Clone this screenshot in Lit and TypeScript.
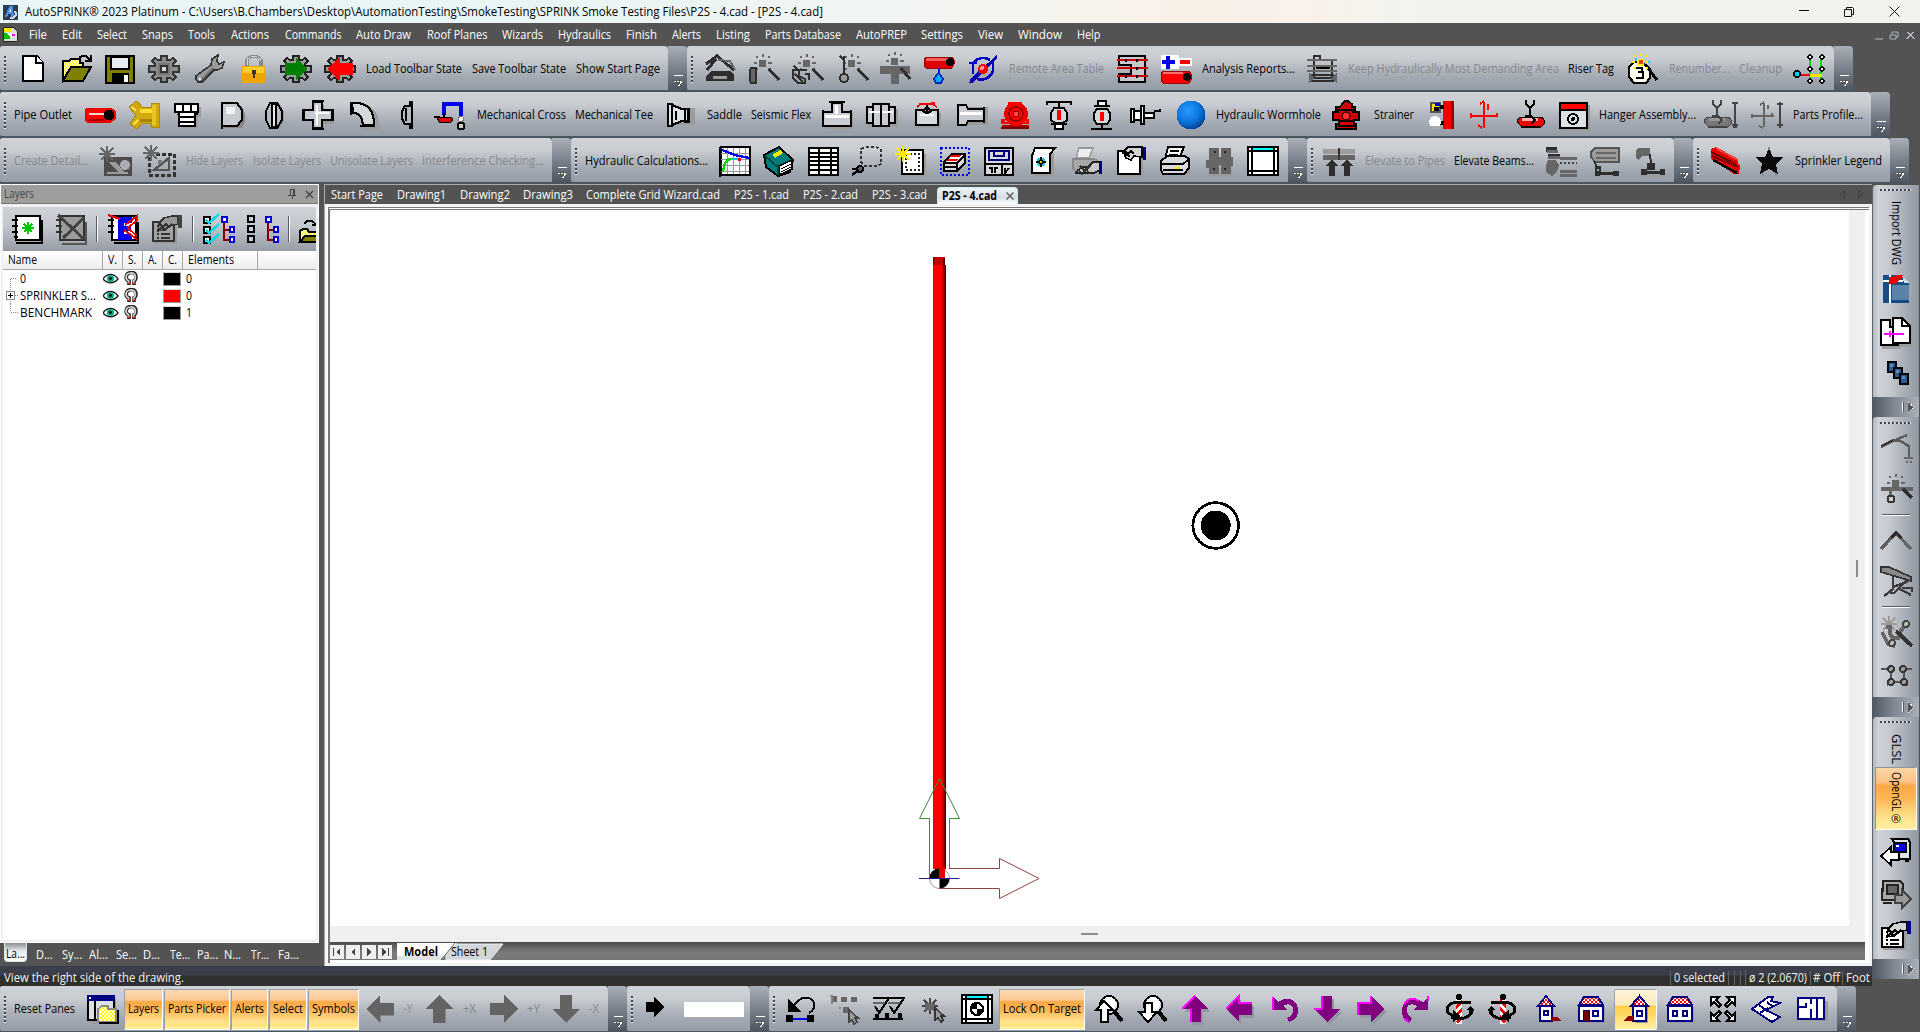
import { LitElement, html, css, svg, nothing } from "lit";
import { customElement, property } from "lit/decorators.js";

/* ---------- drawing helpers for the 32 x 32 toolbar icons ---------- */
const K = "#000", R = "#ff0000", G = "#666", D = "#2e2e2e", N = "#000080", S = "#9b9b9b", W = "#fff";
const p = (d: string, f = "none", s = "none", w = 2) =>
  svg`<path d=${d} fill=${f} stroke=${s} stroke-width=${w}></path>`;
const c = (x: number, y: number, r: number, f = "none", s = "none", w = 2) =>
  svg`<circle cx=${x} cy=${y} r=${r} fill=${f} stroke=${s} stroke-width=${w}></circle>`;
const burst = (x: number, y: number, f: string) =>
  p(`M${x - 4} ${y - 3}h7v7h-7zM${x - 1} ${y - 9}h2v3h-2zM${x - 9} ${y - 1}h3v2h-3zM${x + 5} ${y - 1}h4v2h-4zM${x - 7} ${y - 7}h2v2h-2zM${x + 5} ${y - 7}h2v2h-2zM${x - 7} ${y + 5}h2v2h-2zM${x + 5} ${y + 5}h2v2h-2z`, f);
const star8 = (x: number, y: number, f: string) =>
  p(`M${x - 8} ${y}h16M${x} ${y - 8}v16M${x - 6} ${y - 6}l12 12M${x + 6} ${y - 6}l-12 12`, "none", f, 2);
const gearShape = "M13 3h6v4h3l3-2 3 3-3 3v2h6v6h-6v2l3 3-3 3-3-2h-3v4h-6v-4h-3l-3 2-3-3 3-3v-2H1v-6h6v-2L4 8l3-3 3 2h3z";
const gearBase = [p(gearShape, S, "#222", 1.6)];
const arrowL = "M1 16L15 2v8h14v12H15v8z";
const arrowU = "M16 2L30 16h-8v14H10V16H2z";
const arrowR = "M31 16L17 2v8H3v12h14v8z";
const arrowD = "M16 30L30 16h-8V2H10v14H2z";
const purple = (d: string, hi: string) => [
  svg`<g transform="translate(2 3)">${p(d, "#9196a0")}</g>`, p(d, "#800080"), p(hi, "none", "#ff00ff", 2)];
const house = (x: number, w: number, door: unknown) => [
  p(`M${x + 2} 14h${w}v16h-${w}z`, S),
  p(`M${x} 13h${w}v15h-${w}z`, W, N, 2),
  w > 18 ? p(`M${x} 12l5-8h${w - 10}l5 8z`, "url(#chk)", N, 2) : p(`M${x - 2} 13l${w / 2 + 2}-10 ${w / 2 + 2} 10z`, "url(#chk)", N, 2),
  door];
const handSheet = (paper: string, skin: string, cuff: string, ink: string) => [
  p("M3 11h23v20H3z", S), p("M2 9h21v19H2z", paper, ink, 2),
  p("M6 17h2M6 21h2M6 25h2M10 21h9M10 25h9", "none", ink, 2),
  p("M8 10l5-5 8-2h6v8l-8 2-6 4-6 1z", skin, ink, 1.5), p("M6 14l3-3 3 3 3-3 3 3 3-3M8 17l3-3 3 3 3-3", "none", ink, 1.5), p("M27 2h4v13h-4z", cuff)];
const mag = (arrow: string) => [c(17, 12, 9, "#d5d8dc", K, 2), p("M22 18l8 10", "none", K, 4), c(17, 11, 7, W), p(arrow, W, K, 2)];
const barber = (flip: boolean) => svg`<g transform=${flip ? "translate(32 0) scale(-1 1)" : ""}>
  ${p("M13 6h6v25h-6z", W)}${p("M13 12l6-6v4l-6 6zM13 20l6-6v4l-6 6zM13 28l6-6v4l-4 5z", R)}${c(16, 4, 3, K)}
  ${p("M28 9H14c-12 2-14 11-2 14", "none", K, 3)}${p("M8 24c10 4 20 0 21-6h-3", "none", K, 3)}${p("M10 17v12l8-6z", K)}${p("M23 17h8l-3-4z", K)}</g>`;
const sheetWin = [p("M1 2h30v28H1z", W, K, 2), p("M1 6h30M5 2v28M27 2v28M1 26h30", "none", K, 1.5), p("M6 3h20v2H6z", "#0ff")];
const hanger = (a: string, b: string, l: string) => [p("M12 1v4l4 4 4-4V1M16 9v10", "none", l, 2.4), p("M6 18h22l2 3v4l-3 3H8l-3-3-2-3z", b, l, 1), p("M8 19h16v3H8z", a), p("M11 17h6l4 4-4 4M7 28h19", "none", l, 1.5)];

const ICONS: Record<string, unknown> = {
  new: [p("M6 3h14l6 7v18H6z", W, K, 2), p("M19 3v7h7", W, K, 2)],
  open: [p("M2 8h6l2-2h9v4h3v4H10L2 27z", "url(#yel)", K, 2), p("M2 28l8-14h20l-8 14z", "#808000", K, 2), p("M18 5l3-2h4l4 4M30 2v6h-6", "none", K, 2)],
  save: [p("M2 3h28v27H2z", "#808000", K, 2.4), p("M7 4h18v12H7z", "#e8ecf0", K, 1.5), p("M8 20h17v9H8z", K), p("M20 22h4v7h-4z", W)],
  gear: [p(gearShape, "#8d8d8d", "#333", 1.6), p("M10 10h12v12H10z", "#777"), p("M13 13h6v6h-6z", "#d6d8db", "#333", 1.6)],
  wrench: [p("M18 12l1-6 6-4-1 6 2 3 5-2-2 6-5 2-3 0L9 29l-4 0-2-3 0-3z", S, "#333", 1.6), p("M20 15L7 28", "none", "#777", 2), c(7, 26, 1.3, W)],
  lock: [p("M9 13V8c0-6 14-6 14 0v5", "none", "#8a8a8a", 3.5), p("M9 12V8c0-6 14-6 14 0", "none", "#d8d8d8", 1), p("M4 13h23v17H4z", "#eda600"), p("M5 14h21v6H5z", "#ffd02a"), p("M14 17h4v4h-1v4h-2v-4h-1z", "#333")],
  gearG: [...gearBase, p("M5 10h11V5l12 11-12 11v-5H5z", "#008000")],
  gearR: [...gearBase, p("M29 10H16V4L3 16l13 12v-6h13z", R)],
  detect: [p("M2 28h28v-7l-4-3H8l-6 5z", D), p("M9 23h14v3H9z", S), p("M2 11L13 3l17 14M12 6l-9 11", "none", D, 3), p("M14 7l12 1 5 9", "none", G, 2)],
  wand1: [burst(16, 10, G), p("M22 16l10 11", "none", D, 3), p("M4 15h5v15H4l-1-2V17z", G, D, 2)],
  wand2: [burst(16, 10, G), p("M22 16l10 11", "none", D, 3), p("M2 17h6v6l6 3v4H7l-5-5zM8 17h8M4 21l8 8M3 13l4 4M14 21h4v6", "none", D, 2)],
  wand3: [burst(16, 10, G), p("M22 16l10 11", "none", D, 3), p("M4 3l4 4v14M8 3v9", "none", D, 2), c(8, 25, 4, S, D, 2)],
  wand4: [burst(16, 8, G), p("M1 13h30v8H20v10h-8V21H1z", G), p("M22 15l9 11", "none", D, 3)],
  pipeDrop: [p("M3 4h26l2 3v4l-2 4H3l-2-3V7z", "#e00000", "#900", 1), p("M3 5h22v3H3z", "#ff5a5a"), c(27, 9, 4, K), p("M16 15v5l4 6-2 4h-5l-2-4 4-6", "#00a8ff", "#0020c0", 1.5)],
  orbit: [p("M30 2v3L6 30H2l2-5z", "#0000b0"), p("M23 7c-6-4-14-2-17 4v10M10 26c8 2 14-2 16-8V9M2 10h8", "none", "#0000c8", 2.6), c(16, 16, 5, R), c(15, 15, 2, "#ff9a9a")],
  area: [p("M3 3h26v26H3v-8h12V12H3z", "#c5c8cd", K, 2), p("M1 7h31M1 15h31M1 23h31", "none", "#d00000", 1.6), p("M9 6h2v3H9zM20 6h2v3h-2zM20 14h2v3h-2zM9 22h2v3H9zM20 22h2v3h-2z", K)],
  plusMinus: [p("M1 2h18v14H1z", W), p("M6 3h4v4h5v4h-5v5H6v-5H2V7h4z", "#0000e8"), p("M19 6h12v6H19z", R, W, 1.5), p("M3 18h26l2 3v6l-2 3H3l-2-3v-6z", R, "#900", 1), p("M3 19h20v2H3z", "#ff7070"), c(27, 24, 4, K)],
  frame: [p("M8 3h6v4h12v18H8z", "none", D, 2), p("M1 7h30M1 13h30M1 18h30", "none", G, 1.6), p("M5 22h22v6H5z", "none", D, 2), p("M9 25l-6-5v10zM25 25l6-5v10z", G), p("M10 15h14", "none", K, 1.5)],
  tag3: [p("M8 9h8l8 7v9l-4 5H8l-5-6V14z", "#fffff0", K, 2.2), p("M10 15h6v4h-4 5v6h-7", "none", K, 2.2), p("M21 14l10 13", "none", K, 3), burst(15, 9, "#ffee00"), p("M13 7h4v4h-4z", "#e04000"), p("M22 8h2v2h-2zM9 5h2v2H9z", "#0cf")],
  tree: [p("M17 4v24M28 4v24", "none", "#00e000", 2), p("M7 22h12", "none", R, 2.5), p("M17 22h12", "none", "#ffe800", 3), c(4, 21, 3, "#0cf", K, 1.6), ...[4, 16, 28].flatMap(y => [c(17, y, 2, W, K, 1.6), c(29, y, 2, W, K, 1.6)])],
  pipeRed: [p("M3 9h24l4 3v8l-4 3H3l-2-3V12z", R, "#d00", 1), p("M5 14h17v2H5z", "#ffd0d0"), p("M5 20h16v2H5z", "#a00000"), c(25, 16, 5.5, K)],
  brass: [p("M1 8l8-6 5 6h9V4h8v24h-8v-4h-9l-5 6-7-5 6-9z", "#d0a90c", "#b08a00", 1), p("M12 10h12v4H12z", "#ffdb38"), p("M24 6h4v20h-4z", "#e8c424"), p("M12 20h12v3H12z", "#a88200"), p("M4 8l4 4M5 26l5-5", "none", "#ffe050", 2)],
  plug: [p("M6 8h24v10h-3v11H11z", S), p("M4 5h23v8H4zM8 13h16v14H8z", W, K, 2), p("M12 5v7M20 5v7M9 18h14M9 23h14M7 15l2 3", "none", K, 2), p("M24 15h3", "none", K, 2)],
  cap: [p("M10 9h17l2 6v8l-3 6H9z", "#888"), p("M6 4h15l5 7v10l-5 6H6z", "#c8cbd0", K, 2.2), p("M10 8h9v7h-9z", "#f2f4f6"), p("M6 3v27", "none", K, 2.4)],
  flange: [p("M14 5h8l4 8v9l-4 8h-8z", S), p("M12 4h7l5 8v9l-5 8h-7l-4-8V12z", "#b8bcc2", K, 2.2), p("M14 5h4v23h-4z", "#e6e8ea", K, 1.5)],
  cross: [p("M12 6h10v9h10v10H22v6H12z", "#999"), p("M11 3h9v8h10v10H20v8h-9v-8H2V11h9z", "#c8ccd2", K, 2.2), p("M13 14h14M15 6v20", "none", W, 2), p("M1 10v12M31 10v12M10 2h12M10 30h12", "none", K, 2)],
  elbow: [p("M7 6c16-1 24 7 24 23H15", "none", S, 3), p("M5 4c16-1 22 7 22 22H16c-1-9-4-12-10-12z", "#d5d8dc", K, 2.2), p("M4 3v13M13 27h15", "none", K, 2.6)],
  cap2: [p("M15 7h5V3h2v26h-2v-4h-5l-3-5v-8z", "#b5bac0", K, 2.2), p("M16 9v13", "none", K, 2)],
  gooseneck: [p("M10 16V5h17v13", "none", "#0000f0", 3.4), p("M3 18h14l2 2-2 3H5z", "#e00000", K, 1), p("M0 18h6M10 14v5", "none", K, 2), c(27, 20, 2.5, W, "#777", 1), c(27, 27, 3.4, "#ccc", K, 2)],
  reducer: [p("M8 9h23v17H8z", S), p("M4 5h4v22H4zM8 6l10 4h6v12h-6L8 26z", "#dfe2e5", K, 2.2), p("M21 10h4v13h-4zM12 12v9", "none", K, 2)],
  tee: [p("M4 14h28v16H4z", S), p("M11 4h10v9h9v14H2V13h9z", "#c9cdd2", K, 2.2), p("M8 3h16M2 11v17M30 11v17", "none", K, 2.4), p("M4 17h24M15 6v9", "none", W, 3)],
  coupling: [p("M4 10h29v18H4z", S), p("M2 8h6v16H2zM8 5h16v22H8zM24 8h6v16h-6z", "#c9cdd2", K, 2.2), p("M4 13h24", "none", W, 2.6), p("M16 5v22", "none", K, 2)],
  wye: [p("M6 14h24v15H6z", S), p("M5 11h6l5 4 5-4h6v15H5z", "#d5d8dc", K, 2.2), p("M16 5v8M12 12l4-4 4 4", "none", K, 2), p("M6 8l4-3h12l4 3M8 5h2M20 4h4", "none", R, 1.8), p("M9 16h14", "none", W, 2)],
  nozzle: [p("M5 8h28v18H5z", S), p("M3 6h8l2 4h16v12H13l-2 4H3z", "#c9cdd2", K, 2.2), p("M5 14h22", "none", W, 3), p("M29 8v16", "none", K, 2)],
  pump: [p("M3 26h27v4H3z", "#a00"), c(17, 15, 12, "#e80000"), p("M9 3h14v6H9zM2 25h28v-5h-3v3H6v-3H2z", R), c(17, 15, 7, R, "#900", 1.6), c(17, 15, 3, "#ff4a4a", "#900", 1), p("M2 29h28", "none", "#700", 2)],
  sprkUp: [p("M4 6V3h24v3M16 3v5", "none", K, 2.2), p("M11 9h10l3 5v7l-4 3h-8l-4-3v-7z", "#d5d8dc", K, 2), p("M14 11h4v10h-4z", R), p("M8 25h16M12 25v5h8v-5", W, K, 2.2)],
  sprkDn: [p("M8 7h16M12 2v5h8V2z", W, K, 2.2), p("M11 10h10l3 4v7l-3 4h-10l-3-4v-7z", "#d5d8dc", K, 2), p("M14 13h4v9h-4z", R), p("M16 25v5M6 30h20M6 29v2", "none", K, 2.4)],
  sidewall: [p("M2 10h3v13H2zM5 12h7v9H5zM12 7h3v18h-3z", W, K, 2), p("M15 14h10v5H15z", W, K, 1.6), p("M25 12h6v-2", "none", K, 1.8)],
  sphere: [svg`<circle cx="16" cy="16" r="14.5" fill="url(#ball)"></circle>`],
  hydrant: [p("M12 5l3-3h3l4 3v3h3v3h-2v2h6v8h-5v4h2v5H6v-5h3v-4H3v-8h5v-2H6V8h4z", "#d40000", K, 1.8), p("M6 11h20M9 22h15M8 27h17", "none", K, 1.4), c(16, 17, 4, "#ff2a2a", "#500", 1.4)],
  snow: [p("M17 2h11v28H17z", "#f00000"), p("M25 2h3v28h-3z", "#900"), p("M5 4h9v9H5z", "#ffe000", "#555", 1.6), p("M9 4h5v3H9z", "#0000d0"), p("M8 8h5v4H8z", K), p("M14 8h4M14 24h4", "none", K, 4), c(9, 23, 6, W), p("M5 27h8v3H5z", "#aaa")],
  crossR: [p("M3 17h27M16 3v26M12 5l4-3M20 5v6M3 14v5M29 14v4M10 26l4 3", "none", R, 2)],
  hang: hanger("#ffb0b0", "#f00000", K),
  window: [p("M4 6h29v26H4z", S), p("M3 4h27v25H3z", "#dfe2e5", K, 2.4), p("M4 5h25v5H4z", R), p("M3 11h27", "none", K, 2), c(16, 20, 5, "none", K, 2), c(16, 20, 2, K)],
  hangG: [svg`<g transform="translate(-5 0)">${hanger("#999", "#777", "#444")}</g>`, p("M29 3v26M26 4h6M26 26h6M27 28h4", "none", "#444", 2)],
  crossG: [p("M1 17h22M13 4v24M9 6l4-3M17 6v4M1 15v4M21 14v4M8 27l4 2", "none", G, 2), p("M29 3v26M26 5h6M26 26h6", "none", "#444", 2)],
  detail1: [p("M4 12h28v19H4z", "#4c4c4c"), star8(7, 9, G), p("M9 17h7l8 10h-6z", S), c(25, 20, 5, "#a9acb1"), p("M7 28h21", "none", S, 1.5)],
  detail2: [svg`<path d="M6 9h24v21H5V12" fill="none" stroke="#333" stroke-width="3" stroke-dasharray="4 2"></path>`, star8(7, 8, G), p("M10 25l15-12v12z", "none", "#555", 2.4), p("M14 15h4v4h-4z", "#777")],
  graph: [p("M2 2h29v28H2z", W, K, 2.4), p("M2 8h28M2 14h28M2 20h28M2 26h28M8 3v26M14 3v26M20 3v26M26 3v26", "none", "#999", 1), p("M3 5l13 5 14 3", "none", "#0000f0", 2.4), p("M4 27c1-9 4-13 8-13", "none", "#00d800", 2.4), p("M12 14h9", "none", "#00c8d0", 2), p("M19 13h3v3h-3z", R), p("M1 2v30", "none", K, 2)],
  book: [p("M1 10L16 2l14 13-3 12-12 4L3 22z", "#007c7c", K, 2), p("M16 21l13-6v9l-12 6z", W, K, 1.5), p("M9 10l8-5 3 3-8 5z", "#ffee00"), p("M18 24l10-5M18 27l10-5", "none", K, 1), p("M2 11l13 11v8", "none", "#004848", 2)],
  table: [p("M2 3h29v27H2z", W, K, 2.4), p("M2 8h29M2 12h29M2 16h29M2 20h29M2 25h29", "none", K, 1.8), p("M12 3v27M24 3v27", "none", K, 2)],
  lasso: [svg`<path d="M10 4l4-2h11l5 3v14l-4 2H14l-4-4z" fill="none" stroke="#333" stroke-width="2" stroke-dasharray="3 2"></path>`, c(9, 24, 3, G, K, 2), p("M1 30l7-5M1 24h6", "none", K, 2.5)],
  newdoc: [p("M8 9h23v22H8z", S), p("M7 5h21v24H7z", W, K, 2), svg`<path d="M11 9h13v16H11z" fill="none" stroke="#222" stroke-width="2" stroke-dasharray="2 2"></path>`, star8(8, 9, "#ffe800")],
  selBox: [svg`<path d="M2 3h28v27H2z" fill="none" stroke="#0000f0" stroke-width="2" stroke-dasharray="2 2"></path>`, p("M5 17l8-8h13v9l-8 8H5z", "#d8dadd", K, 2), p("M6 17l7-7h12l-6 7z", W), p("M12 10h10l-2 2H11zM9 14h10l-2 2H8z", R), p("M18 18l8-8M6 18h12v7M6 22h12", "none", K, 1.8)],
  panel: [p("M2 3h28v27H2z", "#d8dadd", K, 2.4), p("M6 6h20v9H6zM11 6v5h10V6", "none", N, 2), p("M2 19h28M19 19v11M6 23h3v5M12 28v-5h3M22 23v5l4-5", "none", K, 2)],
  scroll: [p("M7 9h20v22H7z", S), p("M8 3h20l-5 6v19H5V11z", W, K, 2), c(14, 17, 4.5, "#0cc"), p("M14 12v10M9 17h10", "none", K, 1.4), c(14, 17, 2, "#f0c000", K, 1)],
  printG: [p("M8 3h14l-4 10H5z", "#eee", "#999", 1.6), p("M2 14h22l5 4v8H4l-2-3z", "#a8a8a8", "#888", 1.4), p("M5 28l5-6h7l5-5h7v8l-6 3z", "#c8c8c8", "#222", 1.5), p("M7 24l4 5 4-5 4 5M9 21l5 5 5-5", "none", "#333", 1.5), p("M28 16h3v13h-3z", N)],
  docHand: [p("M5 8h23v24H5z", S), p("M3 6h22v23H3z", W, K, 2.2), p("M9 6l4-4h14v10l-8-1-3 4-5-2z", "#d0d2d4", K, 1.6), p("M7 9l3-3 3 3 3-3 3 3M9 12l3-3 3 3", "none", K, 1.6), p("M28 2h3v13h-3z", N)],
  print: [p("M4 16h27v13H8z", S), p("M9 2h16l-5 12H6z", W, K, 2), p("M11 6h9M10 10h9", "none", K, 1.6), p("M2 16l6-5h18l4 3v9l-5 6H4l-2-4z", "#d8dadd", K, 2), p("M3 19h21l5-4M4 25h20", "none", K, 2), p("M15 22h6v2h-6z", "#ffe800")],
  fixture: [p("M5 3h10v26H5v-6H2v-8h3zM17 3h10v9h2v9h-2v8H17z", G), p("M14 12h5v8h-5z", G), p("M10 6h2v2h-2zM20 6h2v2h-2zM9 23h2v2H9zM20 23h2v2h-2z", "#222"), p("M5 30h23", "none", S, 2)],
  winCad: sheetWin,
  elevPipe: [p("M0 4h32v5H0z", S), p("M0 10h32v5H0z", G), p("M16 3v12", "none", "#333", 1.5), p("M9 15l7 6h-4v10H6V21H2zM24 15l7 6h-4v10h-6V21h-4z", D)],
  elev1: [p("M1 2h11v5H1zM3 9h12v5H3z", D), p("M2 6h11M3 12h12", "none", G, 3), p("M3 15h8l3 5-2 7-5 4-6-4V20z", G), p("M15 13h17M15 26h17M15 30h17", "none", G, 3), svg`<path d="M15 18h17" stroke="#444" stroke-width="2" stroke-dasharray="2 2"></path>`],
  elev2: [p("M6 3h24v14H6l-4-5V7z", S, "#555", 2), p("M7 8h20M7 13h20", "none", G, 2), p("M5 16l4 8M7 22h4v6H7z", "none", D, 2), p("M6 26h5v5H6zM24 26h6v5h-6zM11 27h14v3H11z", D)],
  elev3: [p("M4 3h12v8H8l-3 4-3-2V6z", G), p("M16 9l1 10M14 19h6v5h-6z", D, D, 2), p("M7 24h6v6H7zM26 24h5v6h-5zM13 26h14v3H13z", D), p("M8 31h24", "none", S, 2)],
  beam: [p("M2 4l5-2 22 12v4l2 3-1 8-5 0L2 14z", "#e80000"), p("M3 11l26 11M2 7l25 12", "none", "#700", 2), p("M4 15l24 13", "none", K, 2.5), p("M7 3l22 12", "none", "#ff4040", 2)],
  star: [p("M16 3l4 9h10l-7 7 2 10-9-5-9 5 2-10-7-7h10z", "#0a0a0a"), p("M16 2v3M9 30h2M22 30h2", "none", "#888", 1.5)],
  layNew: [p("M5 3h24v24H5z", W, K, 2.2), p("M1 7h6M1 13h6M1 19h6M3 24h4", "none", K, 2.4), p("M11 15h12M17 9v12M13 11l8 8M21 11l-8 8", "none", "#00c800", 1.8), p("M5 30h26V7", "none", K, 1.8)],
  layDel: [p("M5 3h24v24H5z", S, "#333", 2.2), p("M1 7h6M1 13h6M1 19h6", "none", "#333", 2.2), p("M3 2l26 24M29 5L8 25", "none", "#444", 3), p("M7 31h24V9", "none", "#555", 2)],
  layE: [p("M5 3h24v24H5z", W, K, 2.2), p("M1 7h6M1 13h6M1 19h6", "none", K, 2.2), p("M11 4h14v6h-8v3h7v5h-7v3h8v6H11z", "#0000f0"), p("M1 2l12 4M18 12l12-9v4l-9 8 10 9v3l-14-10", "none", "#e80000", 2), p("M7 30h24V9", "none", K, 1.8)],
  layProp: handSheet("#a0a2a4", "#999", "#444", "#333"),
  layTree: [p("M1 4h6v6H1zM1 14h6v6H1zM1 24h6v6H1z", W, K, 2.2), p("M3 7l3 3 10-9M3 17l3 3 10-9M3 27l3 3 10-9", "none", "#00d8e8", 2.4), p("M21 9v18h6M21 17h6", "none", "#800000", 2), p("M19 4h5v5h-5zM27 14h4v5h-4zM27 24h4v5h-4z", W, "#0000d8", 2)],
  layTree2: [p("M1 3h6v6H1zM1 13h6v6H1zM1 23h6v6H1z", "#ccd", K, 2.2), p("M21 9v18h6M21 17h6", "none", "#800000", 2), p("M19 4h5v5h-5zM27 14h4v5h-4zM27 24h4v5h-4z", W, "#0000d8", 2)],
  layOpen: [p("M1 28V18l3-2h4l2 3h9v9z", "url(#yel)", K, 2), p("M1 29l5-6h13v6z", "#808000", K, 2), p("M5 11l3-3h5l5 4M18 7v5h-5", "none", K, 2)],
  panes: [p("M3 6h27v25H6z", S), p("M2 3h26v24H2z", "#dcdfe3", K, 2), p("M1 2h28v6H1z", N), p("M3 4h2v2H3z", W), p("M9 8v19", "none", K, 2), p("M12 16l4-3h6v3h8v13H12z", "url(#yel)", "#888", 1.5), p("M13 30h19V17", "none", K, 2.4)],
  gL: [p(arrowL, "#636363"), p("M15 22v8M15 22h14", "none", "#888", 1)], gU: [p(arrowU, "#636363"), p("M22 16v14", "none", "#888", 1)],
  gR: [p(arrowR, "#636363"), p("M31 16L17 30", "none", "#888", 1)], gD: [p(arrowD, "#636363"), p("M30 16L16 30", "none", "#888", 1)],
  bR: [p("M7 9h8V4l11 10-11 10v-5H7z", K)],
  undoDim: [p("M5 17L14 7c5-4 13-3 15 3 1 5-1 8-5 10", "none", K, 2), p("M3 6v13h13z", K), p("M1 22h7v7H1zM22 22h7v7h-7z", K), p("M8 26h14", "none", "#0000ff", 2.4)],
  snapG: [p("M2 3h6v6H2zM12 4h6v5h-6zM22 4h6v5h-6zM14 14h6v6h-6z", G), p("M1 3h2v8M10 15h2", "none", "#888", 2), p("M20 17v12l3-2 2 4 3-2-2-4h3z", S, "#444", 1.6)],
  checks: [p("M1 5h32M1 26h30", "none", K, 2), p("M3 13l4 7L17 5M18 13l4 7L32 5", "none", K, 2), p("M1 10h12M16 10h12", "none", G, 1.4), p("M3 25h4v-4H3zM13 26h4v-6h-4zM26 20h4v6h-4z", K)],
  burstG: [star8(14, 13, "#444"), p("M9 10h10v7H9z", G), p("M19 15v12l3-2 3 4 2-2-2-4h3z", S, "#333", 1.6)],
  target: [...sheetWin, c(16, 16, 6, "none", K, 2.4), p("M10 16a6 6 0 016-6v6zM16 16h6a6 6 0 01-6 6z", K)],
  magU: mag("M12 8l9 9h-5v12H9V17H4z"), magD: mag("M9 10h7v9h5l-9 10-9-10h6z"),
  pU: purple("M16 3L29 16h-7v13H11V16H3z", "M3 16L16 3M12 16v13"), pL: purple("M3 16L16 3v7h13v12H16v7z", "M3 16L16 3v7h13"),
  pD: purple("M16 29L3 16h8V3h10v13h8z", "M3 16h8V3"), pR: purple("M29 16L16 3v7H3v12h13v7z", "M3 22V10h13V3"),
  rotL: [p("M6 14V4l5 5c10-7 20-2 20 8s-5 10-9 12l-2-4c6-2 6-6 6-9 0-5-6-6-10-3l4 4H6z", "#800080"), p("M6 17V4", "none", "#ff00ff", 2)],
  rotR: [p("M28 14V4l-5 5C14 2 2 6 2 17s4 10 8 12l2-4c-5-2-5-6-5-9 0-5 6-6 10-3l-4 4h15z", "#800080"), p("M28 3v5M4 12c2-6 9-8 15-4M4 26l5 3", "none", "#ff00ff", 2)],
  barL: barber(false), barR: barber(true),
  h1: house(9, 12, [p("M13 18h4v4h-4z", W, N, 1.8), p("M20 28h10l-4-4h-5z", "#900000")]),
  h2: house(4, 24, [p("M8 17h6v11H8z", "#700000", N, 1), p("M18 18h5v5h-5z", W, N, 1.8)]),
  h3: house(13, 13, [p("M17 18h5v5h-5z", W, N, 1.8), p("M4 28h9v-5H8z", "#900000")]),
  h4: house(4, 24, [p("M9 18h4v5H9zM19 18h4v5h-4z", W, N, 1.8)]),
  expand: [p("M4 4h8l-3 3 5 5-2 2-5-5-3 3zM28 4h-8l3 3-5 5 2 2 5-5 3 3zM4 28h8l-3-3 5-5-2-2-5 5-3-3zM28 28h-8l3-3-5-5 2-2 5 5 3-3z", W, K, 2)],
  iso: [p("M1 16L17 4h5l-2 4 9 2-14 7 14 7-8 5z", W, N, 2), p("M8 12l8 6M16 9l6 5M9 20l8-5", "none", N, 2)],
  plan: [p("M5 8h28v20H5z", S), p("M3 5h26v21H3z", W, N, 2.4), p("M3 14h8v-4M22 6v19M16 5v6M16 16v9", "none", N, 2.2)],
  dwg: [p("M3 2h19l7 8v20H3z", "#174d84"), p("M12 12h17v15H12z", "#5b83aa"), p("M3 8h20M10 2v28", "none", W, 2), p("M9 4h4l2-2h8v3l-5 3-3 3h-6z", "#e80000"), p("M22 2l7 8h-5z", "#c8d8e8")],
  docs: [p("M2 31h19M30 7v22H16", "none", S, 3), p("M1 4h9v7h8v18H1z", W, K, 2.2), p("M13 2h9l8 8v17H13z", W, K, 2.2), p("M22 2v8h7", "none", K, 2), p("M4 18h20M10 15v6", "none", "#ff00ff", 2.4)],
  chain: [p("M8 4h8v10H8z", "#245c93", K, 2), p("M14 10h8v10h-8z", "#245c93", K, 2), p("M20 16h8v10h-8z", "#245c93", K, 2), p("M10 6h3v3h-3zM16 12h3v3h-3zM22 18h3v3h-3z", "#5b8bbb")],
  arc: [p("M1 15l12-6h7l9 5v11M13 9l14-6", "none", "#5c5c5c", 2.6), p("M24 26h9M26 30h2M30 30h2", "none", G, 2.4), p("M1 14l12-6", "none", "#333", 1.4)],
  sprkW: [burst(16, 9, G), p("M1 13h31v3H1zM10 15v10", G, G, 1), p("M10 15v10", "none", G, 3), p("M23 15l9 9", "none", D, 3), c(11, 25, 3.5, "#ccc", "#333", 2)],
  roof: [p("M1 25L16 9l15 16", "none", G, 3.4), p("M10 13l6-7 6 7-2 2-4-4-4 4z", D), p("M1 23l9-9", "none", "#333", 1)],
  roof2: [p("M1 1h8l22 10v4L1 6z", "#8a8a8a", "#333", 1.8), p("M13 9v14L4 30M13 21l16-6M18 22l13 7M26 15L14 27h-4M22 22h10v4", "none", "#3c3c3c", 2.4)],
  wizard: [star8(9, 7, S), p("M6 10h4v7l3 4h5l2-6 6-8M2 15l6 12 7 2", "none", "#666", 4), c(26, 7, 3, "#bbb", "#444", 2), c(12, 26, 3, "#bbb", "#444", 2), p("M16 14l16 15", "none", "#333", 4)],
  nodes: [p("M1 9h10v13h13V9h8M11 22l-4 3M24 22l4 3", "none", "#555", 2.6), c(11, 9, 3, S, "#333", 2), c(23, 9, 3, S, "#333", 2), c(11, 22, 3, S, "#333", 2), c(24, 22, 3, S, "#333", 2)],
  monL: [p("M12 3h16l2 3v17H15V8z", "#e0e2e5", K, 2.2), p("M14 7h12v9H14z", "#0000f0", K, 1.5), p("M16 9h3v2h-3z", W), p("M1 20l10-9v5h8v8h-8v5z", W, K, 1.8), p("M25 25h4", "none", K, 2)],
  monR: [p("M3 3h17l3 3v16H2z", "#a6a8aa", "#222", 2.2), p("M7 7h11v9H7z", "#666", "#222", 1.6), p("M31 21l-9-9v5h-7v8h7v5z", "#999", "#444", 1.6), p("M3 25h9", "none", "#222", 2)],
  sheetHand: [...handSheet(W, "#d0d2d4", N, K)],
  app: [p("M1 1h30v30H1z", "#2c3d50"), p("M5 26L15 4h6l3 22h-6l-1-6h-4l-3 6z", "#4c8ce0"), p("M17 9l-3 7h4z", W), p("M25 14c6 6 2 15-9 15", "none", "#cfd6de", 4)],
  doc: [p("M2 2h21l7 6v22H2z", "#d8e0d0", "#222", 2), p("M3 3h16v7H3z", "#ffe800"), p("M3 13h12v13H3z", "#00c000"), p("M8 13l11 12V12z", W), p("M20 14h5v5h-5z", "#e0e")],
};

const icon = (name: string, size = 32) => html`<svg class="ic" width=${size} height=${size} viewBox="0 0 32 32" shape-rendering="crispEdges">
  <defs>
    <pattern id="chk" width="4" height="4" patternUnits="userSpaceOnUse"><rect width="4" height="4" fill="#fff"></rect><rect width="2" height="2" fill="#f00"></rect><rect x="2" y="2" width="2" height="2" fill="#f00"></rect></pattern>
    <pattern id="yel" width="4" height="4" patternUnits="userSpaceOnUse"><rect width="4" height="4" fill="#ff0"></rect><rect width="2" height="2" fill="#fffce0"></rect><rect x="2" y="2" width="2" height="2" fill="#fffce0"></rect></pattern>
    <radialGradient id="ball" cx=".4" cy=".35" r=".7"><stop offset="0" stop-color="#2a9bff"></stop><stop offset=".6" stop-color="#0a72dc"></stop><stop offset="1" stop-color="#023a86"></stop></radialGradient>
  </defs>${ICONS[name]}</svg>`;

/* Label whose glyphs are condensed to fill a given advance width. */
@customElement("fit-text")
class FitText extends LitElement {
  @property({ type: Number }) w = 0;
  @property({ type: Boolean }) vertical = false;
  static styles = css`
    :host { display: block; flex: none; white-space: pre; }
    .t { display: inline-block; transform-origin: 0 0; }
    .v { display: block; writing-mode: vertical-rl; width: 16px; height: max-content; }
  `;
  render() { return html`<span class=${this.vertical ? "t v" : "t"}><slot></slot></span>`; }
  firstUpdated() {
    const t = this.renderRoot.querySelector(".t") as HTMLElement;
    const b = t.getBoundingClientRect();
    if (this.vertical) {
      this.style.height = this.w + "px";
      t.style.transform = `scaleY(${this.w / b.height})`;
    } else {
      this.style.width = this.w + "px";
      t.style.transform = `scaleX(${this.w / b.width})`;
    }
  }
}

/* Items carry their start offset and extent; rows turn them into flow margins. */
interface Item { x: number; w: number; body: unknown; cls?: string }
const T = (x: number, e: number, s: string, cls = ""): Item => ({ x, w: e - x, body: html`<fit-text .w=${e - x}>${s}</fit-text>`, cls });
const X = (x: number, e: number, s: string) => T(x, e, s, "dis");
const I = (mid: number, name: string): Item => ({ x: mid - 16, w: 32, body: icon(name) });
const B = (x: number, e: number, s: string, pad: number): Item => ({ x, w: e - x, cls: "btn", body: html`<fit-text .w=${e - x - pad * 2}>${s}</fit-text>` });
const row = (start: number, items: Item[]) => {
  let at = start;
  return items.map(i => {
    const m = i.x - at;
    at = i.x + i.w;
    return html`<div class="item ${i.cls ?? ""}" style="margin-left:${m.toFixed(1)}px;width:${i.w.toFixed(1)}px">${i.body}</div>`;
  });
};
const more = html`<div class="more"><svg width="12" height="16" viewBox="0 0 12 16" shape-rendering="crispEdges"><path d="M2 1h9v1H2z" fill="#fff"></path><path d="M1 6h9l-4 6z" fill="#555"></path><path d="M2 7h8l-4 6" fill="none" stroke="#fff" stroke-dasharray="2 1"></path></svg></div>`;
const bar = (start: number, end: number, items: Item[]) => html`<div class="bar" style="width:${end - start}px">
  <div class="body"><i class="grip"></i>${row(start + 6, items)}</div>${more}</div>`;

const MENU: [number, number, string][] = [[29, 47, "File"], [62, 82, "Edit"], [97, 127, "Select"], [142, 173, "Snaps"], [188, 215, "Tools"], [231, 269, "Actions"], [284.5, 341, "Commands"], [356, 411, "Auto Draw"], [426.5, 487, "Roof Planes"], [502, 543, "Wizards"], [558, 611, "Hydraulics"], [626, 657, "Finish"], [672, 701, "Alerts"], [716, 750, "Listing"], [765, 841, "Parts Database"], [856, 907, "AutoPREP"], [921, 963, "Settings"], [978, 1003, "View"], [1018, 1062, "Window"], [1077, 1100.5, "Help"]];
const TABS: [number, number, string][] = [[331, 383, "Start Page"], [397, 446, "Drawing1"], [460, 510, "Drawing2"], [523, 573, "Drawing3"], [586, 720, "Complete Grid Wizard.cad"], [734, 789, "P2S - 1.cad"], [803, 858, "P2S - 2.cad"], [872, 927, "P2S - 3.cad"]];
const PANES: [number, number, string][] = [[35.5, 52, "D..."], [62, 82, "Sy..."], [89, 108, "Al..."], [116, 137, "Se..."], [143, 160, "D..."], [170, 190, "Te..."], [197, 218, "Pa..."], [224, 241, "N..."], [251, 269, "Tr..."], [278, 299, "Fa..."]];

const eye = html`<svg width="16" height="14" viewBox="0 0 16 14"><path d="M0 7C4 1 11 1 15 7 11 12 4 12 0 7z" fill="#fff" stroke="#222" stroke-width="1.4"></path><circle cx="7.5" cy="6.5" r="3.6" fill="#0aa58c"></circle><circle cx="7.5" cy="6.5" r="1.4" fill="#000"></circle></svg>`;
const magnet = html`<svg width="14" height="15" viewBox="0 0 14 15"><path d="M5 14V10C1 9 1 2 7 1.500S13 9 10 10v4" fill="none" stroke="#222" stroke-width="3.600"></path><path d="M4.600 12V10C1 8 1 2.500 6.500 2S12.500 8 9.600 10v2" fill="none" stroke="#d4d4d4" stroke-width="1.700"></path><path d="M3 11.500h3v1.500H3zM9 11.500h3v1.500H9z" fill="#e22"></path></svg>`;

@customElement("app-root")
class AppRoot extends LitElement {
  static styles = css`
    :host { display: flex; flex-direction: column; width: 1920px; height: 1032px; overflow: hidden; background: #535353; font: 12px/16px "Open Sans", "Noto Sans", sans-serif; color: #000; }
    * { box-sizing: border-box; }
    .ic { display: block; flex: none; overflow: visible; }
    .item { display: flex; align-items: center; flex: none; justify-content: center; }
    .dis { color: #85888d; }
    .title { height: 23px; flex: none; display: flex; align-items: center; background: linear-gradient(90deg, #e7f5f7 0, #e9f5f5 28%, #f2f5f2 48%, #f9f1e8 62%, #f9f1ea 68%, #f1f4ee 74%, #f1f4ee 100%); }
    .title .item.cap { font-size: 12.5px; }
    .menu { height: 23px; flex: none; display: flex; align-items: center; color: #fff; }
    .tools { flex: none; }
    .line { display: flex; height: 46px; }
    .bar { display: flex; height: 44px; flex: none; border-radius: 2px; overflow: hidden; background: #626b76; box-shadow: 0 2px 0 #4b5560; }
    .body { flex: 1; display: flex; align-items: center; min-width: 0; padding-top: 2px; background: linear-gradient(#cfd2d7 0, #c9ccd1 28%, #b6bbc2 48%, #a3a9b2 72%, #969ca6 100%); border-radius: 2px 4px 0 0; }
    .grip { width: 2px; height: 27px; margin-left: 4px; flex: none; background: repeating-linear-gradient(#3d444d 0 2px, #e9ebee 2px 3px, transparent 3px 4px); }
    .more { width: 19px; flex: none; display: flex; align-items: flex-end; justify-content: center; background: linear-gradient(#a9afb8, #7e8691 45%, #4d5661); border-radius: 0 4px 0 0; }
    .mid { display: flex; height: 783px; margin-top: -1px; flex: none; border-top: 1px solid #4c5560; }
    .left { width: 319px; margin-right: 5px; display: flex; flex-direction: column; }
    .panel { height: 760px; background: #f0f0f0; border: 1px solid #fff; display: flex; flex-direction: column; padding: 0 2px 2px; }
    .phead { height: 19px; flex: none; margin: 0 -2px; background: #9c9e9b; border-bottom: 1px solid #777; display: flex; align-items: center; color: #484848; }
    .ptools { height: 44px; margin-top: 3px; flex: none; overflow: hidden; display: flex; align-items: center; background: linear-gradient(#cfd2d7, #c4c8ce 40%, #969ca6); }
    .sep { width: 2px; height: 26px; background: #fff; border-left: 1px solid #555d68; }
    .cols { display: flex; height: 19px; flex: none; background: linear-gradient(#fff, #ededed); border-bottom: 1px solid #a8a8a8; }
    .cols div { border-right: 1px solid #a8a8a8; display: flex; align-items: center; padding-left: 5px; }
    .cols .last { border: 0; }
    .list { flex: 1; background: #fff; }
    .layer { display: flex; align-items: center; height: 17px; }
    .tree { width: 17px; height: 17px; flex: none; }
    .sw { width: 18px; height: 14px; border: 1px solid #999; border-top-color: #ddd; flex: none; }
    .ptabs { display: flex; height: 23px; color: #fff; align-items: center; }
    .ptabs .on { background: linear-gradient(#8b9095, #e9ecef 45%, #fff); border-radius: 0 0 4px 4px; color: #000; height: 19px; padding-top: 3px; align-self: flex-start; border: 1px solid #cfeaf0; border-top: 0; }
    .doc { width: 1548px; display: flex; flex-direction: column; border-left: 1px solid #aaa; border-top: 1px solid #aaa; }
    .tabs { display: flex; height: 19px; align-items: center; color: #fff; flex: none; }
    .tabs .on { height: 17px; align-self: flex-end; background: linear-gradient(#eef3f5, #d8dde2 60%, #fff); color: #000; font-weight: 700; border: 1px solid #cdeef2; border-bottom: 0; border-radius: 4px 4px 0 0; gap: 9px; }
    .frame { height: 762px; display: flex; border: solid #f3f3f3; border-width: 3px 3px 3px 2px; background: #fff; flex: none; }
    .inner { flex: 1; display: flex; flex-direction: column; border: solid #777; border-width: 3px 0 0 2px; margin-left: 1px; border-style: double solid solid solid; }
    .view { display: flex; height: 716px; flex: none; }
    .canvas { background: #fff; width: 1519px; flex: none; display: block; }
    .vs { width: 16px; background: #efefef; display: flex; align-items: center; justify-content: center; }
    .vs i { width: 2px; height: 17px; background: #8b8b8b; }
    .hs { height: 16px; width: 1535px; background: #efefef; display: flex; align-items: center; padding-left: 751px; flex: none; }
    .hs i { width: 17px; height: 2px; background: #8b8b8b; }
    .sheets { height: 18px; width: 1535px; padding-top: 1px; background: linear-gradient(#454545 0, #555 10%, #6a6a6a 35%, #7a7a7a 60%, #777); display: flex; flex: none; }
    .right { width: 48px; display: flex; flex-direction: column; margin-top: 1px; }
    .vbar { display: flex; flex-direction: column; align-items: center; width: 47px; background: linear-gradient(90deg, #b4b9c0 0, #cfd2d7 12%, #c6cad0 35%, #a5abb4 75%, #949aa4 100%); border-left: 1px solid #5a636e; border-right: 1px solid #8a919b; border-radius: 4px 0 0 0; flex: none; }
    .vitem { display: flex; align-items: center; justify-content: center; flex: none; width: 32px; font-size: 12px; }
    .vgrip { height: 2px; width: 31px; background: repeating-linear-gradient(90deg, #3d444d 0 2px, #e9ebee 2px 3px, transparent 3px 4px); flex: none; }
    .vsep { height: 2px; width: 28px; background: #fff; border-top: 1px solid #555d68; }
    .vmore { height: 20px; width: 47px; flex: none; background: linear-gradient(90deg, #4d5661, #7e8691 45%, #a9afb8); display: flex; align-items: center; justify-content: flex-end; padding-right: 4px; }
    .vbtn { width: 42px; background: linear-gradient(#fcd5a6 0, #fdc488 22%, #fca945 30%, #fcb555 50%, #fee18c 80%, #ffee9f 100%); border: 1px solid #f3ead2; border-color: #8b93a0 #fff #fff #8b93a0; }
    .status { height: 20px; width: 1872px; flex: none; display: flex; align-items: center; padding-top: 4px; color: #f4f4f4; background: linear-gradient(#3c3f4b 0 9px, #30302e 10px 100%); }
    .bottom { display: flex; height: 46px; flex: none; }
    .bottom .bar { height: 45px; }
    .bottom .body { padding-top: 1px; }
    .btn { height: 41px; background: linear-gradient(#fcd9b4 0, #fcc892 26%, #fba944 30%, #fcb75a 52%, #fee38e 82%, #fee27a 92%, #ffee9f 95%); border: 1px solid #fff; border-color: #9ba0a8 #fff #fff #9ba0a8; }
    .hot { height: 41px; background: linear-gradient(#fdf3d8 0, #fdeab9 38%, #ffcf4d 42%, #ffd75a 60%, #fff0a8 100%); border: 1px solid #fff; border-color: #9ba0a8 #fff #fff #9ba0a8; border-radius: 2px; }
    .field { background: #fff; height: 15px; }
    .bold { font-weight: 700; }
    .nav { background: #efefef; height: 14px; margin-top: 2px; }
    .vl { height: 14px; background: #666; }
    .sheet { display: grid; height: 18px; }
    .sheet > * { grid-area: 1 / 1; }
    .names { display: flex; align-items: center; }
  `;

  private ctl(d: string, w: number, col: string) {
    return html`<svg width=${w} height="12" viewBox="0 0 ${w} 12"><path d=${d} fill="none" stroke=${col}></path></svg>`;
  }

  private canvas() {
    return html`<svg class="canvas" width="1519" height="716" viewBox="330 210 1519 716">
      <defs><linearGradient id="pipe"><stop offset="0" stop-color="#d80000"></stop><stop offset=".12" stop-color="#ff0000"></stop><stop offset=".68" stop-color="#fa0000"></stop><stop offset=".84" stop-color="#a00000"></stop><stop offset="1" stop-color="#200000"></stop></linearGradient></defs>
      <circle cx="939.5" cy="878.5" r="10" fill="#fff" stroke="#999" stroke-width="1"></circle>
      <path d="M929.500 878.500a10 10 0 0110-10v10zM949.500 878.500a10 10 0 01-10 10v-10z" fill="#000"></path>
      <rect x="933" y="265" width="13" height="604" fill="url(#pipe)"></rect>
      <rect x="933" y="257" width="12" height="8" fill="#c80000"></rect><rect x="933" y="257" width="2" height="8" fill="#8a0000"></rect><rect x="943" y="258" width="2" height="7" fill="#5a0000"></rect>
      <path d="M929.500 878.500a10 10 0 0110-10v10z" fill="#000"></path><rect x="939" y="867" width="6" height="11" fill="#e80000"></rect>
      <path d="M929.500 877V818.500H919.500L939.500 778.500L959.500 818.500H949.500V868" fill="none" stroke="#3b8f3b"></path>
      <path d="M949 868.500H999.500V858.500L1039 878.500L999.500 898.500V888.500H939" fill="none" stroke="#934343"></path>
      <path d="M919 878.500H959.500" stroke="#1c1c8c" stroke-width="1.200"></path>
      <g shape-rendering="crispEdges"><circle cx="1215.700" cy="525.500" r="22.800" fill="none" stroke="#000" stroke-width="2.800"></circle><circle cx="1215.700" cy="525.500" r="15" fill="#000"></circle></g>
    </svg>`;
  }

  private layer(kind: number, name: string, w: number, col: string, n: string) {
    return html`<div class="layer"><svg class="tree" viewBox="0 0 17 17" shape-rendering="crispEdges">
      <path d=${kind === 0 ? "M7.500 9v8M8 8.500h6" : kind === 1 ? "M7.500 0v17M12 8.500h3" : "M7.500 0v8M8 8.500h7"} fill="none" stroke="#888" stroke-dasharray="1 1"></path>
      ${kind === 1 ? svg`<rect x="3.500" y="4.500" width="8" height="8" fill="#fff" stroke="#888"></rect><path d="M5 8.500h5M7.500 6v5" stroke="#000"></path>` : nothing}</svg>
      ${row(20, [T(20, 20 + w, name), { x: 103, w: 16, body: eye }, { x: 124, w: 14, body: magnet }, { x: 163, w: 18, body: html`<div class="sw" style="background:${col}"></div>` }, T(186, 192, n)])}</div>`;
  }

  private vflow(start: number, items: { y: number; h: number; cls?: string; body?: unknown }[]) {
    let at = start;
    return items.map(i => {
      const m = i.y - at;
      at = i.y + i.h;
      return html`<div class=${i.cls ?? "vitem"} style="margin-top:${m}px;height:${i.h}px">${i.body ?? nothing}</div>`;
    });
  }

  render() {
    const V = (mid: number, name: string) => ({ y: mid - 16, h: 32, body: icon(name) });
    const VT = (y: number, e: number, s: string) => ({ y, h: e - y, body: html`<fit-text vertical .w=${e - y}>${s}</fit-text>` });
    const vg = (y: number) => ({ y, h: 2, cls: "vgrip" });
    const vs = (y: number) => ({ y, h: 2, cls: "vsep" });
    const vmore = html`<div class="vmore"><svg width="14" height="12" viewBox="0 0 14 12" shape-rendering="crispEdges"><path d="M1 1h1v10H1z" fill="#fff"></path><path d="M2 1h1v10H2z" fill="#555"></path><path d="M7 1v10l5-5z" fill="#555"></path><path d="M7 1l6 5-6 6" fill="none" stroke="#fff" stroke-dasharray="2 1"></path></svg></div>`;
    const sep = (x: number): Item => ({ x, w: 2, cls: "sep", body: nothing });
    const vl = (x: number): Item => ({ x, w: 1, cls: "vl", body: nothing });
    const nav = (x: number, d: string): Item => ({ x, w: 14, cls: "nav", body: html`<svg width="14" height="14" viewBox="0 0 14 14" shape-rendering="crispEdges"><path d=${d} fill="#444"></path></svg>` });
    return html`
      <div class="title">${row(0, [
        { x: 2, w: 16, body: icon("app", 16) },
        T(24.5, 822.5, "AutoSPRINK® 2023 Platinum - C:\\Users\\B.Chambers\\Desktop\\AutomationTesting\\SmokeTesting\\SPRINK Smoke Testing Files\\P2S - 4.cad - [P2S - 4.cad]", "cap"),
        { x: 1799, w: 10, body: this.ctl("M0 4.500h10", 10, "#111") },
        { x: 1843, w: 12, body: this.ctl("M1.500 3.500h7v7h-7zM3.500 3V1.500h6l1 1v6H9", 12, "#111") },
        { x: 1889, w: 11, body: this.ctl("M.5 .5l10 10M10.500 .5l-10 10", 11, "#111") }])}</div>
      <div class="menu">${row(0, [{ x: 2, w: 16, body: icon("doc", 15) }, ...MENU.map(m => T(...m)),
        { x: 1875, w: 8, body: this.ctl("M0 10h8", 8, "#aeb6c4") },
        { x: 1889, w: 11, body: this.ctl("M1 6h6v4H1zM3 5V3h6v5H7", 11, "#aeb6c4") },
        { x: 1906, w: 9, body: this.ctl("M1 3l7 7M8 3l-7 7M2 3l7 7M7 3l-7 7", 9, "#aeb6c4") }])}</div>
      <div class="tools">
        <div class="line">
          ${bar(0, 687, [I(33, "new"), I(77, "open"), I(120, "save"), I(164, "gear"), I(209, "wrench"), I(254, "lock"), I(296, "gearG"), I(340, "gearR"), T(366, 462, "Load Toolbar State"), T(472, 566, "Save Toolbar State"), T(576, 660, "Show Start Page")])}
          ${bar(687, 1853, [I(720, "detect"), I(763, "wand1"), I(807, "wand2"), I(852, "wand3"), I(895, "wand4"), I(939, "pipeDrop"), I(983, "orbit"), X(1009, 1104, "Remote Area Table"), I(1132, "area"), I(1176, "plusMinus"), T(1202, 1295, "Analysis Reports..."), I(1322, "frame"), X(1348, 1559, "Keep Hydraulically Most Demanding Area"), T(1568, 1614, "Riser Tag"), I(1642, "tag3"), X(1669, 1730, "Renumber..."), X(1739, 1782, "Cleanup"), I(1809, "tree")])}
        </div>
        <div class="line">
          ${bar(0, 1890, [T(14, 72, "Pipe Outlet"), I(100, "pipeRed"), I(144, "brass"), I(187, "plug"), I(232, "cap"), I(274, "flange"), I(318, "cross"), I(363, "elbow"), I(406, "cap2"), I(450, "gooseneck"), T(477, 566, "Mechanical Cross"), T(575, 653, "Mechanical Tee"), I(680, "reducer"), T(707, 742, "Saddle"), T(751, 811, "Seismic Flex"), I(837, "tee"), I(881, "coupling"), I(927, "wye"), I(971, "nozzle"), I(1015, "pump"), I(1059, "sprkUp"), I(1102, "sprkDn"), I(1145, "sidewall"), I(1191, "sphere"), T(1216, 1321, "Hydraulic Wormhole"), I(1346, "hydrant"), T(1374, 1414, "Strainer"), I(1442, "snow"), I(1484, "crossR"), I(1530, "hang"), I(1573, "window"), T(1599, 1696, "Hanger Assembly..."), I(1722, "hangG"), I(1767, "crossG"), T(1793, 1863, "Parts Profile...")])}
        </div>
        <div class="line">
          ${bar(0, 571, [X(14, 89, "Create Detail..."), I(116, "detail1"), I(160, "detail2"), X(186, 243, "Hide Layers"), X(253, 321, "Isolate Layers"), X(330, 413, "Unisolate Layers"), X(422, 544, "Interference Checking...")])}
          ${bar(571, 1307, [T(585, 708, "Hydraulic Calculations..."), I(735, "graph"), I(779, "book"), I(823, "table"), I(867, "lasso"), I(911, "newdoc"), I(955, "selBox"), I(999, "panel"), I(1043, "scroll"), I(1087, "printG"), I(1131, "docHand"), I(1175, "print"), I(1220, "fixture"), I(1263, "winCad")])}
          ${bar(1307, 1693, [I(1339, "elevPipe"), X(1365, 1445, "Elevate to Pipes"), T(1454, 1534, "Elevate Beams..."), I(1561, "elev1"), I(1605, "elev2"), I(1650, "elev3")])}
          ${bar(1693, 1909, [I(1725, "beam"), I(1769, "star"), T(1795, 1882, "Sprinkler Legend")])}
        </div>
      </div>
      <div class="mid">
        <div class="left">
          <div class="panel">
            <div class="phead">${row(1, [T(4, 34, "Layers"),
              { x: 288, w: 9, body: html`<svg width="9" height="10" viewBox="0 0 9 10" shape-rendering="crispEdges"><path d="M2.500 6V.5h4V6M0 6.500h8M4.500 7v3M5.500 1v5" fill="none" stroke="#444"></path></svg>` },
              { x: 305, w: 9, body: html`<svg width="9" height="9" viewBox="0 0 9 9"><path d="M1 1l7 7M8 1L1 8" stroke="#444" stroke-width="1.400"></path></svg>` }])}</div>
            <div class="ptools">${row(3, [I(26.500, "layNew"), I(70.500, "layDel"), sep(96), I(123, "layE"), I(167, "layProp"), sep(192), I(219, "layTree"), I(263, "layTree2"), sep(288), I(315, "layOpen")])}</div>
            <div class="cols">
              <div style="width:100px"><fit-text .w=${29}>Name</fit-text></div><div style="width:20px"><fit-text .w=${9}>V.</fit-text></div><div style="width:20px"><fit-text .w=${8}>S.</fit-text></div><div style="width:20px"><fit-text .w=${9}>A.</fit-text></div><div style="width:20px"><fit-text .w=${9}>C.</fit-text></div><div style="width:75px"><fit-text .w=${46}>Elements</fit-text></div><div class="last"></div>
            </div>
            <div class="list">${this.layer(0, "0", 6, "#000", "0")}${this.layer(1, "SPRINKLER S...", 76, "#f00", "0")}${this.layer(2, "BENCHMARK", 72, "#000", "1")}</div>
          </div>
          <div class="ptabs">${row(0, [{ x: 4, w: 23, cls: "on", body: html`<fit-text .w=${19}>La...</fit-text>` }, ...PANES.map(m => T(...m))])}</div>
        </div>
        <div class="doc">
          <div class="tabs">${row(325, [...TABS.map(m => T(...m)),
            { x: 937, w: 81, cls: "on", body: html`<fit-text .w=${55}>P2S - 4.cad</fit-text><svg width="8" height="8" viewBox="0 0 8 8"><path d="M.5 .5l7 7M7.500 .5l-7 7" stroke="#555" stroke-width="1.300"></path></svg>` },
            { x: 1840, w: 5, body: html`<svg width="5" height="9" viewBox="0 0 5 9"><path d="M4.500 .5v8l-4-4z" fill="none" stroke="#3c3c3c"></path></svg>` },
            { x: 1858, w: 5, body: html`<svg width="5" height="9" viewBox="0 0 5 9"><path d="M.5 .5v8l4-4z" fill="none" stroke="#3c3c3c"></path></svg>` }])}</div>
          <div class="frame"><div class="inner">
            <div class="view">${this.canvas()}<div class="vs"><i></i></div></div>
            <div class="hs"><i></i></div>
            <div class="sheets">${row(330, [
              nav(330, "M3 3h1v8H3zM10 3v8L6 7z"), nav(346, "M9 3v8L5 7z"), nav(362, "M5 3v8l4-4z"), nav(378, "M10 3h1v8h-1zM4 3v8l4-4z"),
              { x: 397, w: 107, body: html`<div class="sheet"><svg width="107" height="18" viewBox="0 0 107 18"><path d="M49 1h57L93 17H49z" fill="#d2d6db" stroke="#eee"></path><path d="M0 0h60L44 17H0z" fill="#fff"></path><path d="M0 13h47l-3 4H0z" fill="#dfe3e8"></path><path d="M58 0L44 17" stroke="#555"></path></svg>
                <div class="names">${row(397, [T(404, 438, "Model", "bold"), T(451, 488, "Sheet 1")])}</div></div>` }])}</div>
          </div></div>
        </div>
        <div class="right">
          <div class="vbar" style="height:212px">${this.vflow(185, [vg(189), VT(201, 265, "Import DWG"), V(289, "dwg"), V(332, "docs"), V(374, "chain")])}</div>${vmore}
          <div class="vbar" style="height:280px">${this.vflow(417, [vg(422), V(448, "arc"), V(490, "sprkW"), vs(514), V(540, "roof"), V(582, "roof2"), vs(606), V(633, "wizard"), V(676, "nodes")])}</div>${vmore}
          <div class="vbar" style="height:242px">${this.vflow(717, [vg(721), VT(734, 764, "GLSL"), { y: 767, h: 63, cls: "vitem vbtn", body: html`<fit-text vertical .w=${54}>OpenGL®</fit-text>` }, V(852, "monL"), V(894, "monR"), V(935, "sheetHand")])}</div>${vmore}
        </div>
      </div>
      <div class="status">${row(0, [T(4, 184, "View the right side of the drawing."), vl(1670), T(1674, 1725, "0 selected"), vl(1728), vl(1734), vl(1740), vl(1745), T(1749, 1807, "ø 2 (2.0670)"), vl(1810), T(1813, 1840, "# Off"), vl(1842), T(1846, 1870, "Foot")])}</div>
      <div class="bottom">
        ${bar(0, 627, [T(14, 75, "Reset Panes"), I(102, "panes"), B(124, 163, "Layers", 4), B(164, 230, "Parts Picker", 4), B(231, 268, "Alerts", 4), B(269, 307, "Select", 4), B(308, 359, "Symbols", 4), I(381, "gL"), X(404, 412, "-Y"), I(439, "gU"), X(463, 476, "+X"), I(503, "gR"), X(527, 540, "+Y"), I(566, "gD"), X(589, 599, "-X")])}
        ${bar(627, 769, [I(655, "bR"), { x: 684, w: 60, cls: "field", body: nothing }])}
        ${bar(769, 1856, [I(801, "undoDim"), I(845, "snapG"), I(888, "checks"), I(932, "burstG"), I(977, "target"), B(999, 1085, "Lock On Target", 4), I(1108, "magU"), I(1152, "magD"), I(1195, "pU"), I(1239, "pL"), I(1283, "rotL"), I(1327, "pD"), I(1371, "pR"), I(1416, "rotR"), I(1459, "barL"), I(1503, "barR"), I(1547, "h1"), I(1591, "h2"), { x: 1614, w: 43, cls: "hot", body: icon("h3") }, I(1680, "h4"), I(1723, "expand"), I(1767, "iso"), I(1811, "plan")])}
      </div>`;
  }
}
